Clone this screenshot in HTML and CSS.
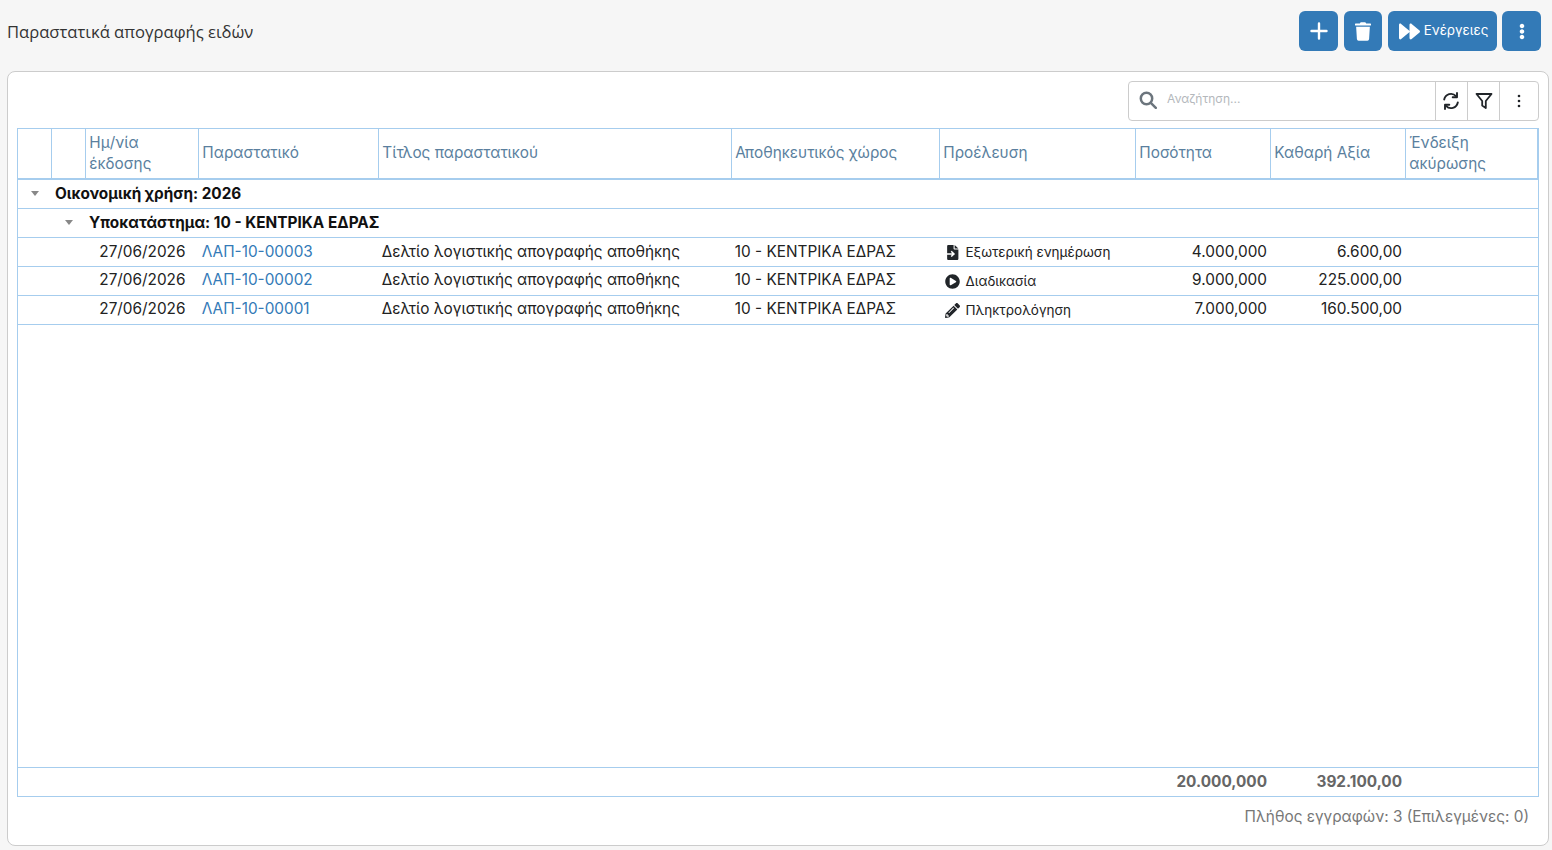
FILE: index.html
```html
<!DOCTYPE html>
<html lang="en">
<head>
  <meta charset="UTF-8">
  <title>Παραστατικά απογραφής ειδών</title>
  <link rel="stylesheet" href="styles.css">
</head>
<body>
  <header class="page-head">
    <h1 class="page-title">Παραστατικά απογραφής ειδών</h1>
    <div class="actions">
      <button class="btn btn-icon btn-add"><svg viewBox="0 0 18 18" class="ico-plus"><path d="M9 1.500v15M1.500 9h15"/></svg></button>
      <button class="btn btn-icon btn-del"><svg viewBox="0 0 448 512" class="ico-trash"><path d="M432 32H312l-9.400-18.700A24 24 0 0 0 281.100 0H166.800a23.720 23.720 0 0 0-21.400 13.300L136 32H16A16 16 0 0 0 0 48v24a16 16 0 0 0 16 16h416a16 16 0 0 0 16-16V48a16 16 0 0 0-16-16zM53.200 467a48 48 0 0 0 47.900 45h245.800a48 48 0 0 0 47.900-45L416 120H32z"/></svg></button>
      <button class="btn btn-run"><svg viewBox="0 0 512 512" class="ico-forward"><path d="M500.500 231.400l-192-160C287.900 54.300 256 68.600 256 96v320c0 27.400 31.900 41.800 52.500 24.600l192-160c15.300-12.800 15.300-36.400 0-49.200zm-256 0l-192-160C31.900 54.300 0 68.600 0 96v320c0 27.400 31.900 41.800 52.500 24.600l192-160c15.300-12.800 15.300-36.400 0-49.200z"/></svg>Ενέργειες</button>
      <button class="btn btn-icon btn-more"><svg viewBox="0 0 192 512" class="ico-dots"><path d="M96 184c39.800 0 72 32.200 72 72s-32.200 72-72 72-72-32.200-72-72 32.200-72 72-72zM24 80c0 39.800 32.200 72 72 72s72-32.200 72-72S135.800 8 96 8 24 40.200 24 80zm0 352c0 39.800 32.200 72 72 72s72-32.200 72-72-32.200-72-72-72-72 32.200-72 72z"/></svg></button>
    </div>
  </header>

  <main class="card">
    <div class="toolbar">
      <div class="searchbar">
        <div class="search-field">
          <svg viewBox="0 0 18 18" class="ico-search"><circle cx="7.500" cy="7.500" r="5.700"/><path d="M11.800 11.800l5 5"/></svg>
          <span class="search-hint">Αναζήτηση...</span>
        </div>
        <button class="tool tool-sync"><svg viewBox="0 0 18 18" class="ico-tool ico-sync"><path d="M2.200 7.500A6.900 6.900 0 0 1 14 4.100"/><path d="M15 1v4.300h-4.300"/><path d="M15.800 10.500A6.900 6.900 0 0 1 4 13.900"/><path d="M3 17v-4.300h4.300"/></svg></button>
        <button class="tool"><svg viewBox="0 0 18 18" class="ico-tool ico-filter"><path d="M1.500 2h15l-5.700 7v7l-3.600-2.600V9z"/></svg></button>
        <button class="tool tool-last"><svg viewBox="0 0 4 14" class="ico-vdots"><circle cx="2" cy="2" r="1.300"/><circle cx="2" cy="7" r="1.300"/><circle cx="2" cy="12" r="1.300"/></svg></button>
      </div>
    </div>

    <div class="grid">
      <div class="row row-head">
        <div class="th"></div>
        <div class="th"></div>
        <div class="th">Ημ/νία έκδοσης</div>
        <div class="th">Παραστατικό</div>
        <div class="th">Τίτλος παραστατικού</div>
        <div class="th">Αποθηκευτικός χώρος</div>
        <div class="th">Προέλευση</div>
        <div class="th">Ποσότητα</div>
        <div class="th">Καθαρή Αξία</div>
        <div class="th th-last">Ένδειξη ακύρωσης</div>
      </div>

      <div class="group group-1"><span class="caret"></span>Οικονομική χρήση: 2026</div>
      <div class="group group-2"><span class="caret"></span>Υποκατάστημα: 10 - ΚΕΝΤΡΙΚΑ ΕΔΡΑΣ</div>

      <div class="row row-data">
        <div class="td"></div>
        <div class="td"></div>
        <div class="td td-date">27/06/2026</div>
        <div class="td"><a href="#" class="doc-link">ΛΑΠ-10-00003</a></div>
        <div class="td">Δελτίο λογιστικής απογραφής αποθήκης</div>
        <div class="td">10 - ΚΕΝΤΡΙΚΑ ΕΔΡΑΣ</div>
        <div class="td td-origin"><svg viewBox="0 0 14 14" class="ico-origin"><path d="M2 1.200C2 .5 2.500 0 3.200 0H8v3.500c0 .4.300.7.700.7H12.500v8.600c0 .7-.5 1.200-1.200 1.200H3.200C2.500 14 2 13.500 2 12.800zM9 0l3.500 3.200H9z"/><path class="arrow-cut" d="M0 8.300h8M5.800 5.800l2.600 2.500-2.600 2.500"/></svg>Εξωτερική ενημέρωση</div>
        <div class="td td-num">4.000,000</div>
        <div class="td td-num">6.600,00</div>
        <div class="td"></div>
      </div>
      <div class="row row-data row-up">
        <div class="td"></div>
        <div class="td"></div>
        <div class="td td-date">27/06/2026</div>
        <div class="td"><a href="#" class="doc-link">ΛΑΠ-10-00002</a></div>
        <div class="td">Δελτίο λογιστικής απογραφής αποθήκης</div>
        <div class="td">10 - ΚΕΝΤΡΙΚΑ ΕΔΡΑΣ</div>
        <div class="td td-origin"><svg viewBox="0 0 512 512" class="ico-origin"><path d="M256 8C119 8 8 119 8 256s111 248 248 248 248-111 248-248S393 8 256 8zm115.700 272l-176 101c-15.800 8.800-35.700-2.500-35.700-20.900V152c0-18.300 19.800-29.700 35.700-20.900l176 107c16.400 9.200 16.400 32.900 0 41.900z"/></svg>Διαδικασία</div>
        <div class="td td-num">9.000,000</div>
        <div class="td td-num">225.000,00</div>
        <div class="td"></div>
      </div>
      <div class="row row-data row-up">
        <div class="td"></div>
        <div class="td"></div>
        <div class="td td-date">27/06/2026</div>
        <div class="td"><a href="#" class="doc-link">ΛΑΠ-10-00001</a></div>
        <div class="td">Δελτίο λογιστικής απογραφής αποθήκης</div>
        <div class="td">10 - ΚΕΝΤΡΙΚΑ ΕΔΡΑΣ</div>
        <div class="td td-origin"><svg viewBox="0 0 512 512" class="ico-origin"><path d="M497.900 142.100l-46.100 46.100c-4.700 4.700-12.300 4.700-17 0l-111-111c-4.700-4.700-4.700-12.300 0-17l46.100-46.100c18.700-18.700 49.100-18.700 67.900 0l60.100 60.100c18.800 18.700 18.800 49.100 0 67.900zM284.200 99.800L21.600 362.400.4 483.900c-2.900 16.400 11.400 30.600 27.800 27.800l121.500-21.300 262.600-262.600c4.700-4.700 4.700-12.300 0-17l-111-111c-4.800-4.700-12.400-4.700-17.100 0zM124.100 339.900c-5.500-5.500-5.500-14.300 0-19.800l154-154c5.500-5.500 14.300-5.500 19.800 0s5.500 14.300 0 19.800l-154 154c-5.500 5.500-14.300 5.500-19.800 0zM88 424h48v36.300l-64.500 11.300-31.100-31.100L51.700 376H88v48z"/></svg>Πληκτρολόγηση</div>
        <div class="td td-num">7.000,000</div>
        <div class="td td-num">160.500,00</div>
        <div class="td"></div>
      </div>

      <div class="grid-fill"></div>

      <div class="row row-total">
        <div class="td"></div>
        <div class="td"></div>
        <div class="td"></div>
        <div class="td"></div>
        <div class="td"></div>
        <div class="td"></div>
        <div class="td"></div>
        <div class="td td-num">20.000,000</div>
        <div class="td td-num">392.100,00</div>
        <div class="td"></div>
      </div>
    </div>

    <div class="status">Πλήθος εγγραφών: 3 (Επιλεγμένες: 0)</div>
  </main>
</body>
</html>
```

FILE: styles.css
```css
* { box-sizing: border-box; }
html, body { height: 100%; }
body {
  margin: 0;
  height: 850px;
  overflow: hidden;
  display: flex;
  flex-direction: column;
  padding: 0 3px 4px 7px;
  background: #f6f6f6;
  color: #212529;
  font-family: Inter, "Noto Sans", sans-serif;
  font-size: 15.35px;
}

/* page header */
.page-head {
  display: flex;
  justify-content: space-between;
  align-items: center;
  height: 71px;
  padding: 11px 8px 20px 0;
  flex-shrink: 0;
}
.page-title {
  margin: 0;
  font-family: "Open Sans", sans-serif;
  font-size: 16.6px;
  font-weight: 400;
  color: #333;
}
.actions { display: flex; gap: 6px; }
.btn {
  display: flex;
  align-items: center;
  justify-content: center;
  height: 40px;
  border: none;
  border-radius: 6px;
  background: #337ab7;
  color: #fff;
  fill: #fff;
  font-family: Inter, sans-serif;
  font-size: 13.4px;
  padding: 0;
}
.btn-add, .btn-more { width: 39px; }
.btn-del { width: 38px; }
.btn-more { margin-left: -1px; }
.btn-run { width: 109px; gap: 4px; padding: 0 0 3px 2px; }
.ico-plus { width: 18px; height: 18px; fill: none; stroke: #fff; stroke-width: 2.400; stroke-linecap: round; }
.ico-trash { width: 16px; height: 19px; }
.ico-forward { width: 21px; height: 21px; margin-top: 3px; }
.ico-dots { width: 6px; height: 17px; }

/* card */
.card {
  flex: 1;
  min-height: 0;
  display: flex;
  flex-direction: column;
  background: #fff;
  border: 1px solid #ccc;
  border-radius: 8px;
  padding: 9px 9px 0;
}
.toolbar { display: flex; justify-content: flex-end; height: 47px; flex-shrink: 0; }
.searchbar {
  display: flex;
  width: 411px;
  height: 40px;
  border: 1px solid #ccc;
  border-radius: 4px;
}
.search-field {
  flex: 1;
  display: flex;
  align-items: center;
  gap: 10px;
  padding-left: 10px;
}
.ico-search { width: 18px; height: 18px; margin-bottom: 2px; fill: none; stroke: #6c757d; stroke-width: 2.500; stroke-linecap: round; }
.search-hint { font-size: 12px; color: #b4b8bc; padding-bottom: 6px; }
.tool {
  width: 32px;
  padding: 0;
  display: flex;
  align-items: center;
  justify-content: center;
  background: none;
  border: none;
  border-left: 1px solid #ccc;
}
.tool-sync { padding-right: 2px; }
.tool-last { width: 39px; }
.ico-tool { width: 18px; height: 18px; }
.ico-sync { fill: none; stroke: #212529; stroke-width: 1.900; stroke-linecap: round; stroke-linejoin: round; }
.ico-filter { fill: none; stroke: #212529; stroke-width: 1.800; stroke-linejoin: round; }
.ico-vdots { width: 4px; height: 14px; fill: #212529; }

/* grid */
.grid {
  flex: 1;
  min-height: 0;
  display: flex;
  flex-direction: column;
  border: 1px solid #a6cdee;
}
.row {
  display: grid;
  grid-template-columns: 34px 34px 113px 180px 353px 208px 196px 135px 135px 132px;
  flex-shrink: 0;
}
.row-head {
  height: 51px;
  border-bottom: 2px solid #a6cdee;
}
.th {
  display: flex;
  align-items: center;
  padding: 0 3px 2px 3.300px;
  border-right: 1px solid #a6cdee;
  color: #5a7f9e;
  line-height: 21px;
}
.group {
  height: 29px;
  display: flex;
  align-items: center;
  padding-bottom: 2px;
  border-bottom: 1px solid #a6cdee;
  font-weight: 700;
  color: #111;
  flex-shrink: 0;
}
.group-1 { padding-left: 13px; }
.group-2 { padding-left: 47px; }
.caret {
  width: 0;
  height: 0;
  margin-right: 16px;
  border-left: 4.500px solid transparent;
  border-right: 4.500px solid transparent;
  border-top: 5px solid #888;
}
.row-data { height: 29px; border-bottom: 1px solid #a6cdee; }
.td {
  display: flex;
  align-items: center;
  padding: 0 3px 2px 2.800px;
  white-space: nowrap;
  color: #222;
}
.row-up .td { padding-bottom: 4px; }
.td-date { justify-content: flex-end; padding-right: 13.500px; }
.td-num { justify-content: flex-end; padding-right: 4px; }
.doc-link { color: #337ab7; text-decoration: none; }
.row-data .td-origin, .row-up .td-origin { font-size: 13.5px; gap: 5.500px; padding: 0 0 0 5px; }
.ico-origin { width: 15px; height: 15px; fill: #212529; }
.arrow-cut { fill: none; stroke: #fff; stroke-width: 1.400; }
.grid-fill { flex: 1; }
.row-total {
  height: 29px;
  border-top: 1px solid #a6cdee;
  font-weight: 700;
}
.row-total .td { color: #666; }

.status {
  height: 48px;
  flex-shrink: 0;
  padding: 10px 10px 0 0;
  text-align: right;
  color: #777;
}
```
